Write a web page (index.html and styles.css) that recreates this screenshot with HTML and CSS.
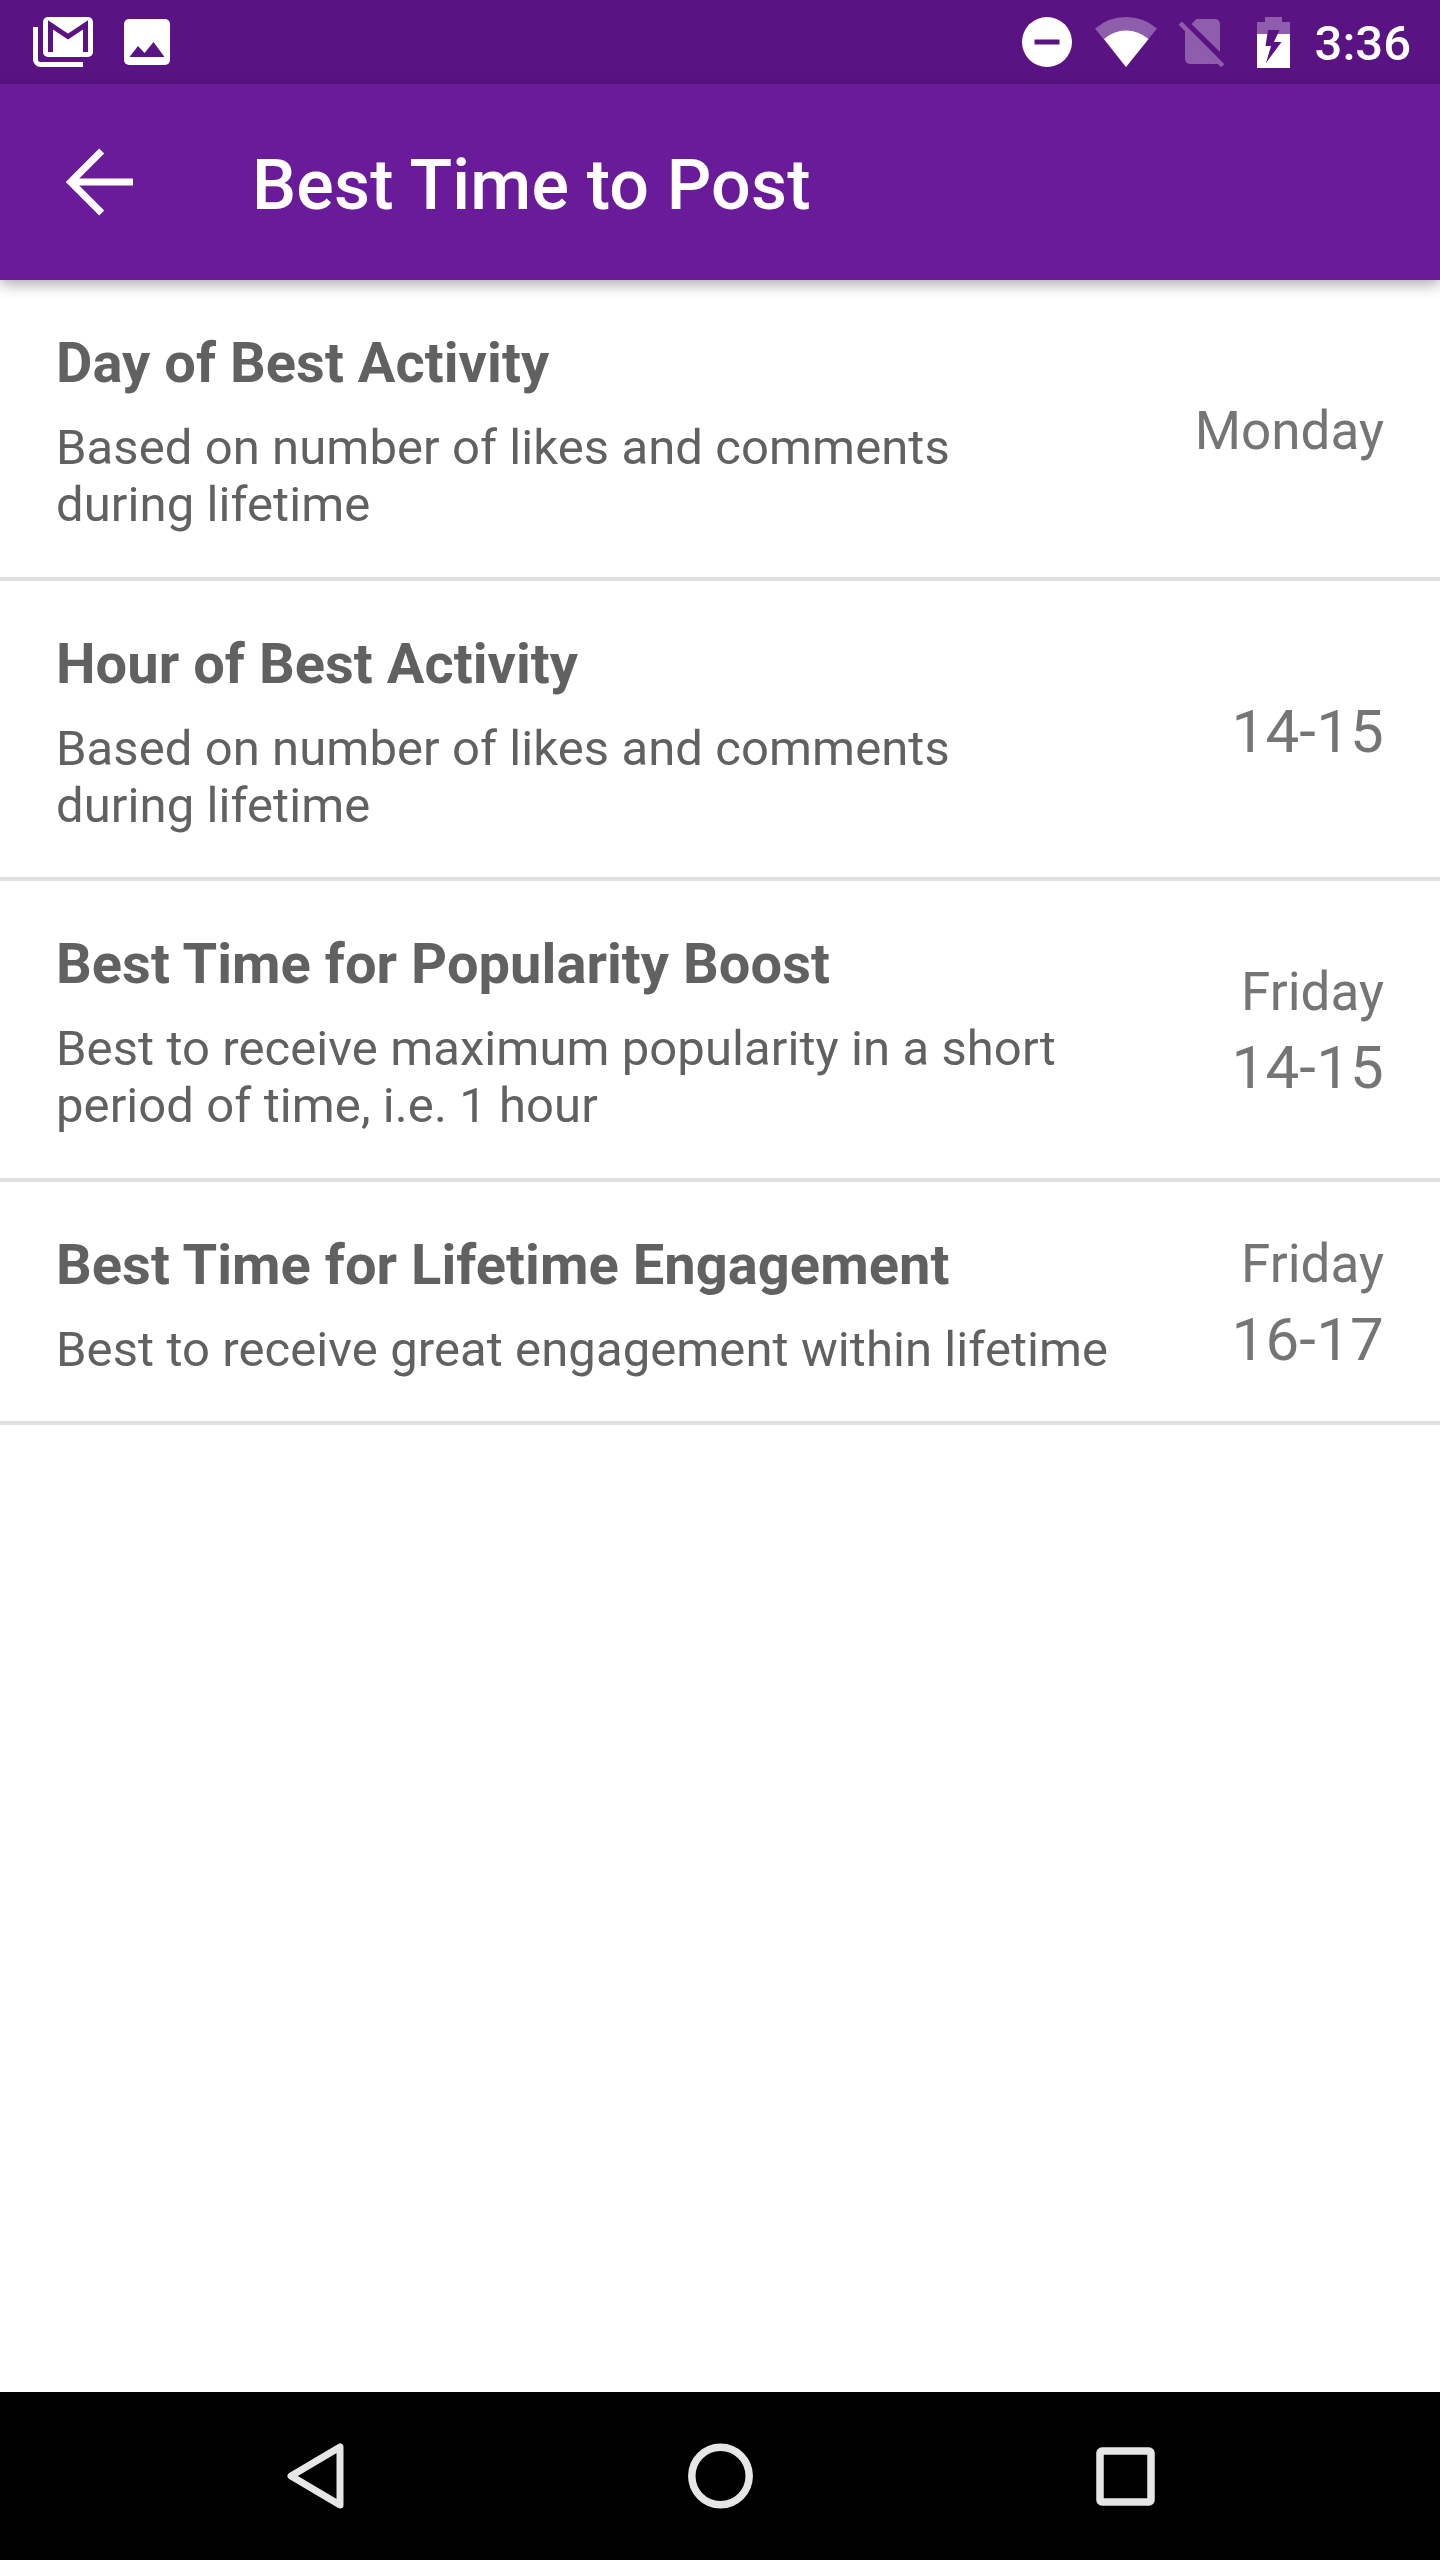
FILE: index.html
```html
<!DOCTYPE html>
<html lang="en">
<head>
    <meta charset="UTF-8">
    <meta name="viewport" content="width=device-width, initial-scale=1.0">
    <title>Best Time to Post</title>
    <link rel="stylesheet" href="styles.css">
</head>
<body>
    <div class="screen">
        <div class="status-bar">
            <svg class="icon-gmail" width="60" height="50" viewBox="0 0 60 50">
                <path d="M2.500 10V42.500a5 5 0 0 0 5 5H50" fill="none" stroke="#fff" stroke-width="5"/>
                <rect x="10" width="50" height="40" rx="5" fill="#fff"/>
                <path d="M17.500 35V8L35 19.500L52.500 8V35" fill="none" stroke="#5a1383" stroke-width="5"/>
            </svg>
            <svg class="icon-image" width="46" height="46" viewBox="0 0 46 46">
                <rect width="46" height="46" rx="5" fill="#fff"/>
                <path d="M5.500 38L14 27l6.500 7L29.500 23L40.500 38z" fill="#5a1383"/>
            </svg>
            <div class="status-right">
                <svg class="icon-dnd" width="50" height="50" viewBox="0 0 50 50">
                    <circle cx="25" cy="25" r="25" fill="#fff"/>
                    <path d="M12.500 22.500h25v5h-25z" fill="#5a1383"/>
                </svg>
                <svg class="icon-wifi" width="62" height="50" viewBox="0 0 62 50">
                    <path d="M0 11.500Q13.500 0 31 0T62 11.500L31 50z" fill="#8e5eac"/>
                    <path d="M9 22Q18.500 13.500 31 13.500T53.500 22L31 50z" fill="#fff"/>
                </svg>
                <svg class="icon-sim" width="47" height="50" viewBox="0 0 47 50">
                    <path d="M13.500 7L18.500 2H37a5 5 0 0 1 5 5V35z" fill="#8e5eac"/>
                    <path d="M7 13.500V42a5 5 0 0 0 5 5H40z" fill="#8e5eac"/>
                    <path d="M2.200 6.200L44.800 48.800" stroke="#8e5eac" stroke-width="4.500"/>
                </svg>
                <svg class="icon-battery" width="33" height="51" viewBox="0 0 33 51">
                    <path d="M8 0H25V5H33V18H0V5H8z" fill="#8e5eac"/>
                    <path d="M0 17H33V51H0z" fill="#fff"/>
                    <path d="M11 13H22.500L17 25H24.500L9 46L14 29H8.500z" fill="#5a1383"/>
                </svg>
                <span class="clock">3:36</span>
            </div>
        </div>

        <div class="app-bar">
            <svg class="back" width="68" height="68" viewBox="0 0 68 68">
                <path d="M35.700 3L4.700 34L35.700 65M4 34H67" fill="none" stroke="#fff" stroke-width="7"/>
            </svg>
            <h1>Best Time to Post</h1>
        </div>

        <div class="list">
            <div class="item">
                <div class="info">
                    <h2>Day of Best Activity</h2>
                    <p>Based on number of likes and comments<br>during lifetime</p>
                </div>
                <div class="result">
                    <div class="day">Monday</div>
                </div>
            </div>
            <div class="item">
                <div class="info">
                    <h2>Hour of Best Activity</h2>
                    <p>Based on number of likes and comments<br>during lifetime</p>
                </div>
                <div class="result">
                    <div class="hour">14-15</div>
                </div>
            </div>
            <div class="item">
                <div class="info">
                    <h2>Best Time for Popularity Boost</h2>
                    <p>Best to receive maximum popularity in a short<br>period of time, i.e. 1 hour</p>
                </div>
                <div class="result">
                    <div class="day">Friday</div>
                    <div class="hour">14-15</div>
                </div>
            </div>
            <div class="item">
                <div class="info">
                    <h2>Best Time for Lifetime Engagement</h2>
                    <p>Best to receive great engagement within lifetime</p>
                </div>
                <div class="result">
                    <div class="day">Friday</div>
                    <div class="hour">16-17</div>
                </div>
            </div>
        </div>

        <div class="nav-bar">
            <svg class="nav-back" width="57" height="66" viewBox="0 0 57 66">
                <path d="M53 4V62L4 33z" fill="none" stroke="#e6e6e6" stroke-width="7" stroke-linejoin="round"/>
            </svg>
            <svg class="nav-home" width="66" height="66" viewBox="0 0 66 66">
                <circle cx="32.500" cy="33" r="28.700" fill="none" stroke="#e6e6e6" stroke-width="7.500"/>
            </svg>
            <svg class="nav-recent" width="59" height="59" viewBox="0 0 59 59">
                <rect x="4" y="4" width="51" height="51" rx="2" fill="none" stroke="#e6e6e6" stroke-width="7.500"/>
            </svg>
        </div>
    </div>
</body>
</html>
```
FILE: styles.css
```css
body {
    margin: 0;
    font-family: Roboto, sans-serif;
    background-color: #fff;
}
svg {
    display: block;
    flex-shrink: 0;
}
h1, h2, p {
    margin: 0;
}
.screen {
    width: 1440px;
    height: 2560px;
    display: flex;
    flex-direction: column;
    overflow: hidden;
}
.status-bar {
    height: 84px;
    display: flex;
    align-items: center;
    box-sizing: border-box;
    padding: 0 29px 0 33px;
    background-color: #5a1383;
}
.icon-image {
    margin-left: 31px;
}
.status-right {
    display: flex;
    align-items: center;
    margin-left: auto;
}
.icon-wifi {
    margin-left: 23px;
}
.icon-sim {
    margin-left: 21px;
}
.icon-battery {
    margin-left: 32px;
}
.clock {
    margin-left: 25px;
    padding-top: 4px;
    font-size: 49px;
    font-weight: 500;
    line-height: 58px;
    color: #fff;
}
.app-bar {
    height: 196px;
    display: flex;
    align-items: center;
    box-sizing: border-box;
    padding-left: 66px;
    background-color: #6a1b99;
    box-shadow: 0 4px 14px rgba(0,0,0,0.35);
    z-index: 1;
}
.app-bar h1 {
    margin-left: 118px;
    padding-top: 6px;
    font-size: 70px;
    font-weight: 500;
    line-height: 82px;
    letter-spacing: 0.15px;
    color: #fff;
}
.list {
    flex: 1;
}
.item {
    display: flex;
    justify-content: space-between;
    padding: 50px 56px 43.5px;
    border-bottom: 4px solid #e0e0e0;
}
.info {
    color: #616161;
    white-space: nowrap;
}
.info h2 {
    margin-bottom: 23px;
    font-size: 56px;
    font-weight: 700;
    line-height: 66px;
    letter-spacing: 0.05px;
}
.info p {
    font-size: 49px;
    line-height: 57px;
    letter-spacing: 0.08px;
}
.result {
    display: flex;
    flex-direction: column;
    justify-content: center;
    gap: 10px;
    padding-bottom: 1px;
    text-align: right;
    color: #757575;
}
.day {
    font-size: 53px;
    line-height: 62px;
}
.hour {
    font-size: 60px;
    line-height: 70px;
    letter-spacing: 0.2px;
}
.nav-bar {
    height: 168px;
    display: flex;
    align-items: center;
    box-sizing: border-box;
    padding-left: 287px;
    background-color: #000;
}
.nav-home {
    margin-left: 344px;
}
.nav-recent {
    margin-left: 342px;
}
```
